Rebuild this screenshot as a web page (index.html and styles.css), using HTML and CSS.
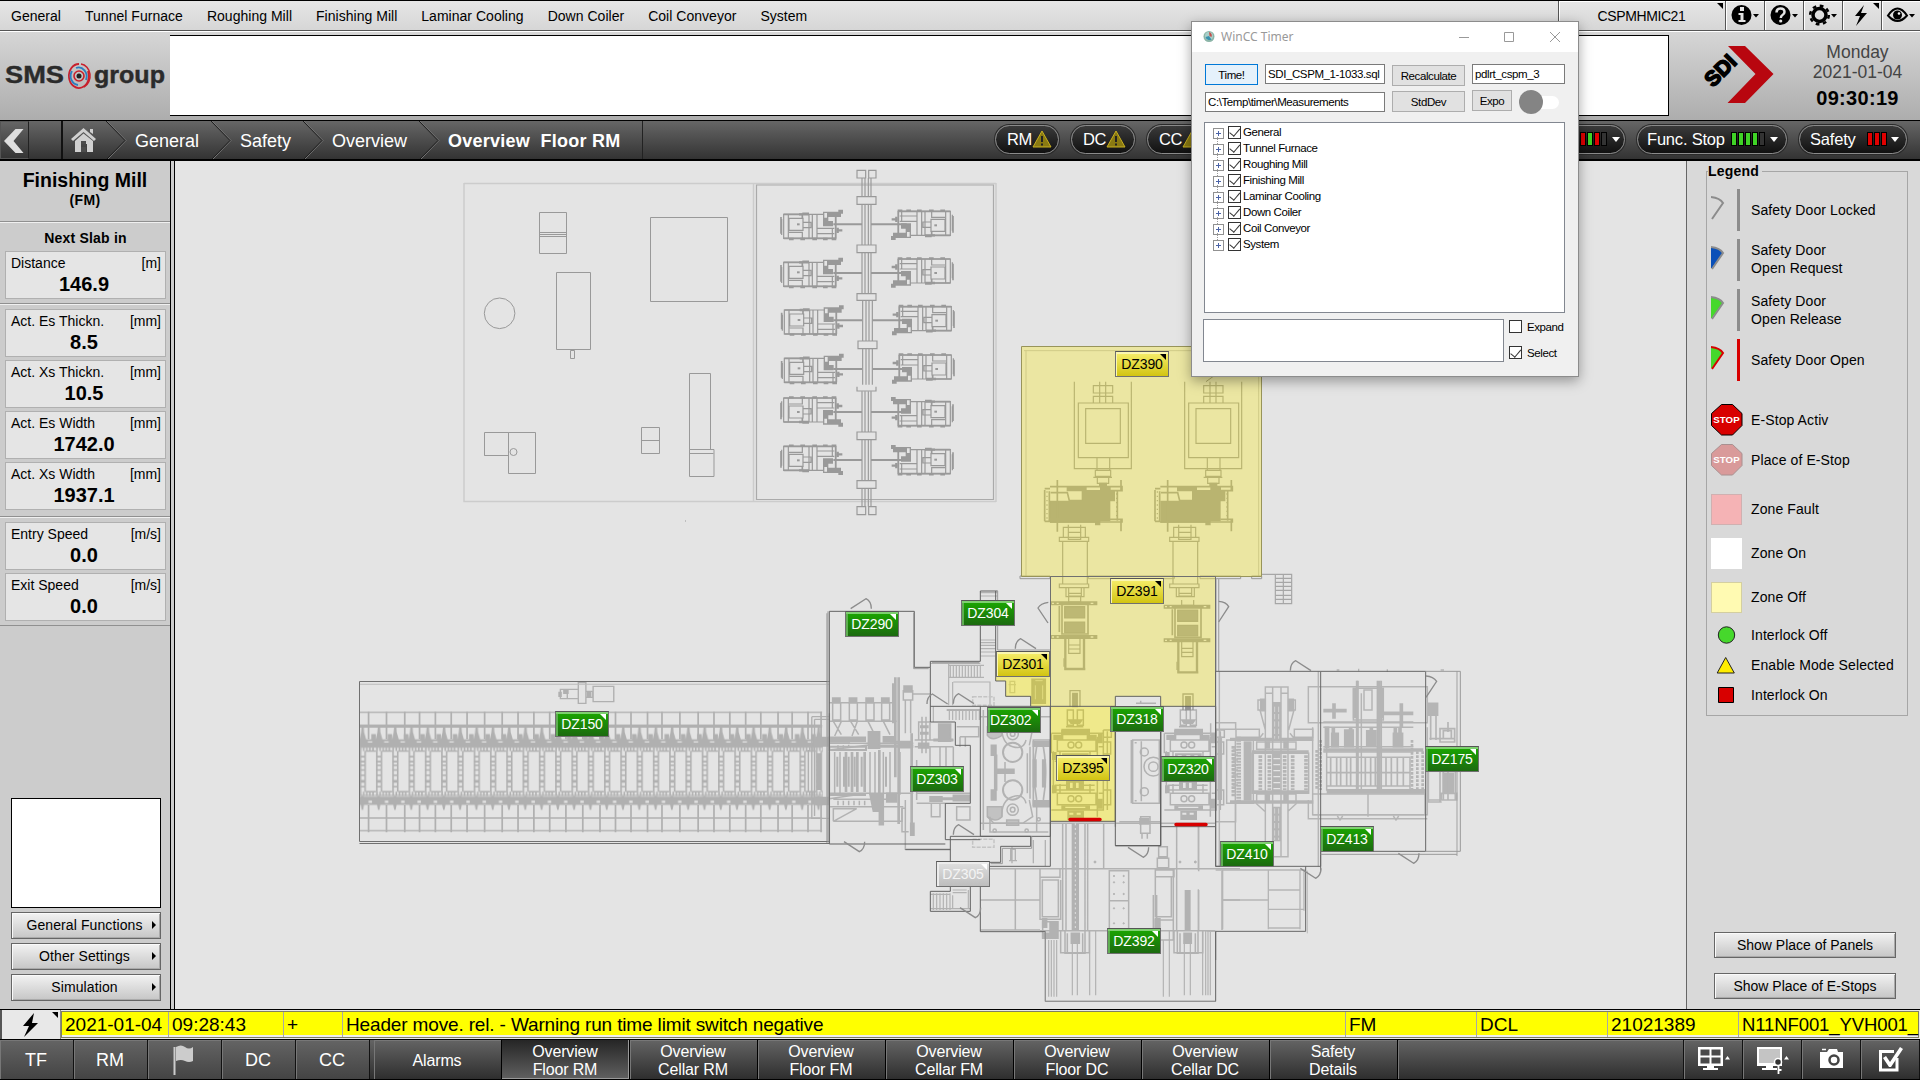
FILE: index.html
```html
<!DOCTYPE html>
<html lang="en">
<head>
<meta charset="utf-8">
<title>Overview Floor RM</title>
<link rel="stylesheet" href="styles.css">
</head>
<body>
<div class="screen">
  <header class="menubar">
    <nav class="menu"><span>General</span><span>Tunnel Furnace</span><span>Roughing Mill</span><span>Finishing Mill</span><span>Laminar Cooling</span><span>Down Coiler</span><span>Coil Conveyor</span><span>System</span></nav>
    <div class="host corner">CSPMHMIC21</div>
    <div class="tool"><svg width="39" height="28"><circle cx="15.500" cy="14" r="10"/><path d="M14 6h4v4h-4zM12.500 12h5v7h2v2h-7v-2h2v-5h-2z" fill="#e4e4e4"/><path d="M27 13h6l-3 3.500z"/></svg></div>
    <div class="tool"><svg width="39" height="28"><circle cx="15.500" cy="14" r="10"/><path d="M11.500 11.500q0-4 4-4t4 3.500q0 2-2 3-1.700 1-1.700 3" fill="none" stroke="#e4e4e4" stroke-width="2.500"/><circle cx="15.700" cy="20" r="1.600" fill="#e4e4e4"/><path d="M27 13h6l-3 3.500z"/></svg></div>
    <div class="tool"><svg width="39" height="28"><circle cx="15.500" cy="14" r="6.500" fill="none" stroke="#000" stroke-width="3.500"/><circle cx="15.500" cy="14" r="9.300" fill="none" stroke="#000" stroke-width="2.500" stroke-dasharray="3.700 3.600"/><path d="M27 13h6l-3 3.500z"/></svg></div>
    <div class="tool corner"><svg width="39" height="28"><path d="M21 4l-9 11h5l-4 10 11-13h-6z"/></svg></div>
    <div class="tool"><svg width="39" height="28"><path d="M6 14.500q9.500-14 19 0q-9.500 11-19 0z" fill="none" stroke="#000" stroke-width="2"/><circle cx="15.500" cy="14" r="4.500"/><circle cx="17" cy="12.500" r="1.300" fill="#fff"/><path d="M27 13h6l-3 3.500z"/></svg></div>
  </header>

  <section class="banner">
    <svg class="sms" width="170" height="86" viewBox="0 32 170 86" fill="none">
      <text x="5" y="82.500" textLength="59" lengthAdjust="spacingAndGlyphs">SMS</text>
      <g transform="translate(67 62)"><path d="M12 2a10 12 0 1 0 9 7" stroke="#c8202c" stroke-width="1.800"/><path d="M14 2a10 12 0 0 1 3 23" stroke="#c8202c" stroke-width="1.500"/><path d="M5 9a8 9 0 0 0 6 14M9 6a8 9 0 0 1 10 12" stroke="#2b7fc0" stroke-width="1.800"/><circle cx="12" cy="14" r="5" stroke="#c8202c" stroke-width="1.600"/><circle cx="12" cy="14" r="2.500" fill="#222"/></g>
      <text x="94" y="82.500" textLength="71" lengthAdjust="spacingAndGlyphs">group</text>
    </svg>
    <div class="blank"></div>
    <svg class="sdi" width="90" height="80" viewBox="1692 36 90 80"><path d="M1728 46h17l28.500 28-28.500 29h-17.500l28-29z" fill="#b8060f"/><text transform="translate(1713 88) rotate(-45)" font-size="21" class="sditext">SDI</text></svg>
    <div class="clock"><div>Monday</div><div>2021-01-04</div><b>09:30:19</b></div>
  </section>

  <section class="crumbs">
    <div class="back"><svg width="28" height="38"><path d="M3 19L14.500 7h8L12.500 19l10 12h-8z" fill="#dedede"/></svg></div>
    <div class="slot"></div>
    <div class="home"><svg width="44" height="38"><path d="M8 18L20.500 7 33 18l-2 2L20.500 11 10 20zM27 8h3v5l-3-2zM12 20l8.500-7.500L30 20v11h-6v-8h-6v8h-6z" fill="#d0d0d0"/><path d="M18 20h5v3h-5zM18 26h5v5h-5z" fill="#4c4c4c"/></svg></div>
    <svg class="sep" width="22" height="38"><path d="M0 0l19 19.500L1 38" /></svg><span class="c1">General</span>
    <svg class="sep" width="22" height="38"><path d="M0 0l19 19.500L1 38" /></svg><span class="c2">Safety</span>
    <svg class="sep" width="22" height="38"><path d="M0 0l19 19.500L1 38" /></svg><span class="c3">Overview</span>
    <svg class="sep" width="22" height="38"><path d="M0 0l19 19.500L1 38" /></svg><b class="c4">Overview&nbsp; Floor RM</b>
    <div class="pills">
      <div class="pill p1">RM<svg class="warn" width="20" height="18"><path d="M10 1l9 16H1z"/><path class="mark" d="M10 6v6M10 13.500v2"/></svg></div>
      <div class="pill p1">DC<svg class="warn" width="20" height="18"><path d="M10 1l9 16H1z"/><path class="mark" d="M10 6v6M10 13.500v2"/></svg></div>
      <div class="pill p1">CC<svg class="warn" width="20" height="18"><path d="M10 1l9 16H1z"/><path class="mark" d="M10 6v6M10 13.500v2"/></svg></div>
      <div class="pill p2">E-Stop<i class="bars"><i class="g"></i><i class="r"></i><i class="g"></i><i class="r"></i><i></i></i><i class="tri"></i></div>
      <div class="pill p3">Func. Stop<i class="bars"><i class="g"></i><i class="g"></i><i class="g"></i><i class="g"></i><i></i></i><i class="tri"></i></div>
      <div class="pill p4">Safety<i class="bars"><i class="r"></i><i class="r"></i><i class="r"></i></i><i class="tri"></i></div>
    </div>
  </section>

  <main class="main">
    <aside class="left">
      <div class="head"><h1>Finishing Mill</h1><h2>(FM)</h2></div>
      <div class="grp first"><h3>Next Slab in</h3>
        <div class="val"><p>Distance<span>[m]</span></p><b>146.9</b></div></div>
      <div class="grp">
        <div class="val"><p>Act. Es Thickn.<span>[mm]</span></p><b>8.5</b></div>
        <div class="val"><p>Act. Xs Thickn.<span>[mm]</span></p><b>10.5</b></div>
        <div class="val"><p>Act. Es Width<span>[mm]</span></p><b>1742.0</b></div>
        <div class="val"><p>Act. Xs Width<span>[mm]</span></p><b>1937.1</b></div></div>
      <div class="grp last">
        <div class="val"><p>Entry Speed<span>[m/s]</span></p><b>0.0</b></div>
        <div class="val"><p>Exit Speed<span>[m/s]</span></p><b>0.0</b></div></div>
      <div class="lower">
        <div class="preview"></div>
        <div class="btn more">General Functions</div>
        <div class="btn more">Other Settings</div>
        <div class="btn more">Simulation</div>
      </div>
    </aside>

    <div class="stage">
      <svg class="plan" width="1510" height="849" viewBox="175 161 1510 849" fill="none">
        <defs>
          <g id="motor" stroke="#999" stroke-width="3.600">
            <path d="M-86-36H70V36H-86zM-92-22V26M-70-24H-28V12H-70zM-72-36V36M-10-36V36M0-36V36M14-36V36M14 6H66M14 22H66M60 6V34M-28-12H-4V4H-28M-70 18H-30V36"/>
            <path d="M-94-28V22M-86-36H-30V-24M70-36V36M-86 36H70" stroke-width="5"/>
            <path d="M-70 38h14M-36 38h14M0 38h14M32 38h14M58 38h14M-30-38h20M-40-36h30M72 12h18M76 4v16" stroke-width="7"/>
            <path d="M32-44h46v-6h14v12h-6v10H48v12h14v16H32z" fill="#999" stroke="none"/>
            <path d="M36-40h8v14h-8zM18-10h12v6H18z" fill="#e4e4e4" stroke="none"/>
            <path d="M-46-6h8" stroke-width="6"/>
          </g>
          <pattern id="roll" patternUnits="userSpaceOnUse" x="57" y="395" width="47.300" height="365">
            <g stroke="#b0b0b0" stroke-width="4.600" transform="translate(0 -395)">
              <path d="M2.500 513V635M16 513V635M2 530h14M0 545h16M2 556h14M0 570h16M2 586h14M0 602h16M2 606h14M0 620h16M18 513H47M18 635H47M3 502V513M12 502V513M21 502V513M30 502V513M39 502V513M3 635V648M12 635V648M21 635V648M30 635V648M39 635V648"/>
              <path d="M-2 502H50M-2 646H50" stroke-width="3"/>
              <path d="M0 478H47.500V502H0zM0 650H47.500V675H0zM0 478l4-20 2-20h6l1 18 6 22zM0 652l8-5 8 5zM3 674h10l-3 16H6zM34 462h13v18H34z" fill="#b0b0b0" stroke="none"/>
              <path d="M24 484h13v4H24zM26 662h10v7H26z" fill="#e4e4e4" stroke="none"/>
            </g>
          </pattern>
          <g id="drive" stroke="#939393" stroke-width="3.500">
            <path d="M223 155V416H394V155M235 219H385V383H235zM257 236H361V340H257zM280 167h58v22h-58zM280 199h58v20h-58zM299 155v64M317 155v64M291 383v38h38V383M286 421h46v18h-46zM280 442h56M292 442v18h34v-18"/>
            <path d="M297 458h24v12h-24zM200 468h60v16h-60zM245 480h100v34h-14v60h-30v12h-16v-8H150v-66H245zM300 470h32v16h-32z" fill="#939393" stroke="none"/>
            <path d="M172 450v155M150 470H366V482H330M150 576H366V568H330M134 480V574M148 484V572M134 476h16M134 574h16M363 450v32M363 568v36M352 484V572M152 488h50l6 24h40" stroke-width="5"/>
            <path d="M141 484V572M350 490V568" stroke-dasharray="4 9"/>
            <path d="M205 584V628H242V584M190 592H256V622H190zM178 622H266V634H178zM188 634V762M262 634V762M178 762H266V773H178zM198 773V800H252V773M206 773V800M244 773V800M206 790h38M206 798h38M206 607h38"/>
          </g>
          <g id="coupling" stroke="#939393" stroke-width="3.500">
            <path d="M186 820H264V912H186zM178 828V906" stroke-width="5"/>
            <path d="M194 830H254V864H194zM194 876H254V908H194z" fill="#999"/>
            <path d="M152 820H292M152 921H292" stroke-width="12"/>
            <path d="M156 820h6M170 820h6M272 820h8M156 921h6M170 921h6M272 921h8" stroke="#e4e4e4" stroke-width="4"/>
            <path d="M206 926V970H240V926M206 945h34M206 957h34M192 985v25M206 800v16h36v-16"/>
            <path d="M193 1017H256M196 926V1020M252 926V1020" stroke-width="7"/>
            <path d="M210 1130V1082H240V1130" stroke-width="4"/><path d="M218 1090h14v40h-14z" fill="#939393"/>
          </g>
          <g id="stand" stroke="currentColor" fill="none" stroke-width="4.400">
            <path d="M742 450h18v46h-18zM772 450h18v46h-18zM738 500h52"/>
            <path d="M742 478h48l-10 14h-28zM724 506h86v20h-86zM700 524h30v16h-30zM800 524h30v16h-30z" fill="currentColor" stroke="none"/>
            <path d="M712 540H828V574H712zM694 520V580M700 574V700M832 530V770M712 700H828V734H712zM704 590h120M704 604h120M704 676h120M704 690h120M726 510V540M806 510V540M694 520H850M694 750H850M720 574V600M810 574V600M720 672V700M810 672V700M850 510V752M862 514V750M850 510h24v22h-24M850 546h22v36h-22M850 690h22v44h-22M836 560h14M836 700h14"/>
            <circle cx="753" cy="555" r="9"/><circle cx="776" cy="555" r="9"/><circle cx="753" cy="716" r="9"/><circle cx="776" cy="716" r="9"/>
            <path d="M726 580h80v24h-80zM738 662h54v28h-54zM724 736h86v14h-86zM742 752h50v28h-50zM696 576h14v24h-14zM696 676h14v24h-14zM834 520h14v30h-14zM834 716h14v30h-14z" fill="currentColor" stroke="none"/>
            <path d="M734 586h12v8h-12zM760 586h12v8h-12zM784 586h10v8h-10zM750 668h8v16h-8zM768 668h8v16h-8zM748 758h12v6h-12zM770 758h12v6h-12zM736 740h60v4h-60z" fill="#e4e4e4" stroke="none"/>
          </g>
          <g id="door" stroke="#8c8c8c" stroke-width="4"><path d="M0 0L46-30Q62-22 62 0"/></g>
        </defs>

        <!-- hall with the twelve auxiliary drives -->
        <g stroke="#ccc" stroke-width="1.500"><path d="M464 183.500H996M464 183V501.500H996M753.500 183V502M996 183V502"/></g>
        <g stroke="#aaa" stroke-width="1.200"><path d="M756.500 185H993.500V499.500H756.500z"/></g>
        <g stroke="#999" stroke-width="1">
          <path d="M539.500 212.500h27v41h-27zM539.500 232.500h27M539.500 234.500h27M539.500 236.500h27M556.500 272.500h34v77h-34zM570.500 350.500h4v8h-4zM650.500 217.500h77v84h-77zM689.500 373.500h21v76h-21zM689.500 449.500h24.500v27h-24.500zM689.500 453.500h24M484.500 432.500h24v23h-24zM508.500 432.500h27v41h-27zM484.500 455.500h24M641.500 427.500h18v26h-18zM641.500 440.500h18M685 521h1"/>
          <circle cx="499.600" cy="313.300" r="15.300"/><circle cx="513.500" cy="452" r="3.500"/>
        </g>
        <g transform="translate(740 150) scale(.33333)" stroke="#999" stroke-width="3.500">
          <path d="M366 84V430M375 84V430M385 84V430M393 84V430M368 451V704M378 451V704M387 451V704M397 451V704M366 724V1070M375 724V1070M385 724V1070M393 724V1070"/>
          <g fill="#e4e4e4"><path d="M351 61h26v23h-26zM386 61h22v23h-22zM351 140h57v23h-57zM351 285h57v23h-57zM351 431h57v20h-57zM354 573h57v23h-57zM351 846h57v23h-57zM351 992h57v23h-57zM351 1070h26v24h-26zM386 1070h22v24h-22z"/></g>
          <path d="M351 710v13h57v-13"/>
          <path d="M280 223H366M393 223H500M280 369H366M393 369H500M280 511H366M397 511H500M280 657H366M397 657H500M280 786H366M393 786H500M280 930H366M393 930H500" stroke-width="6"/>
          <use href="#motor" x="217" y="229"/><use href="#motor" x="217" y="373"/><use href="#motor" x="219" y="516"/><use href="#motor" x="219" y="661"/>
          <use href="#motor" transform="translate(217 780) scale(1 -1)"/><use href="#motor" transform="translate(217 925) scale(1 -1)"/>
          <use href="#motor" transform="translate(545 220) scale(-1)"/><use href="#motor" transform="translate(545 363) scale(-1)"/><use href="#motor" transform="translate(548 506) scale(-1)"/><use href="#motor" transform="translate(548 651) scale(-1)"/>
          <use href="#motor" transform="translate(545 791) scale(-1 1)"/><use href="#motor" transform="translate(545 935) scale(-1 1)"/>
        </g>

        <!-- roller table -->
        <g transform="translate(340 580) scale(.34437 .33333)">
          <rect x="57" y="395" width="1345" height="365" fill="url(#roll)"/>
          <g stroke="#b0b0b0" stroke-width="5">
            <path d="M57 437H1400M57 714H1400"/><path d="M57 397H1400M57 752H1400" stroke="#bcbcbc"/>
            <path d="M83 395V478M135 395V478M188 395V478M231 395V478M277 395V478M323 395V478M369 395V478M420 395V478M471 395V478M517 395V478M563 395V478M609 395V478M656 395V478M705 395V478M755 395V478M800 395V478M845 395V478M893 395V478M935 395V478M987 395V478M1040 395V478M1086 395V478M1132 395V478M1178 395V478M1222 395V478M1272 395V478M1313 395V478M1359 395V478M1397 395V478"/>
            <path d="M83 675V757M135 675V757M188 675V757M231 675V757M277 675V757M323 675V757M369 675V757M420 675V757M471 675V757M517 675V757M563 675V757M609 675V757M656 675V757M705 675V757M755 675V757M800 675V757M845 675V757M893 675V757M935 675V757M987 675V757M1040 675V757M1086 675V757M1132 675V757M1178 675V757M1222 675V757M1272 675V757M1313 675V757M1359 675V757M1397 675V757"/>
            <path d="M57 437H1400M57 441H1400" />
            <path d="M692 308h22v62h-22zM735 319h60v46h-60zM640 328h52v28h-52zM660 328v28M714 334h20v18h-20zM1370 410v305h50M1378 418v290M1370 410h50M1378 418h42M1360 510V635" stroke-width="4"/>
            <path d="M634 335h10v16h-10zM648 330h16v12h-16zM716 334h14v20h-14zM1380 470h40v30h-40zM1380 650h40v26h-40zM1384 520h14v110h-14z" fill="#b0b0b0" stroke="none"/>
          </g>
          <path d="M57 313H1420" stroke="#bbb" stroke-width="3"/>
          <path d="M1414 100V790" stroke="#aaa" stroke-width="4"/>
        </g>

        <!-- mill stands, coordinates at three units per pixel -->
        <g transform="translate(820 560) scale(.33333)" stroke="#b2b2b2" stroke-width="4.500">
          <path d="M38 428h24v52h-24zM88 428h24v52h-24zM138 428h24v52h-24zM185 428h24v52h-24zM28 428H220M28 484H230M40 484l24 40M64 484l-20 44M92 484l24 40M112 484l-16 44M144 484l20 40M190 484l20 40M28 550H280M28 570L140 556H280M28 576V716M44 576V704M60 576V700M150 576V704M165 576V700M190 576V704M210 576V700M240 576V704M28 700H280M40 718H200M40 740H250M40 784V746L110 746L40 784H246V745M28 716L140 700M28 740H160"/>
          <path d="M78 576v120M96 576v120M112 576v120M134 576v120M178 570v130M226 352v300M236 352v440M275 520v300M220 370v120" stroke-width="8"/>
          <path d="M38 414h22v14H38zM88 414h22v14H88zM138 414h22v14h-22zM185 414h22v14h-22zM252 378h24v18h-24zM145 515h34v50h-34zM190 530h30v16h-30zM28 532h60v14H28zM150 704h40v50h-30zM356 492h36v52h-36zM178 754h12v40h-12zM272 790h10v36h-10zM200 700h30v26h-30zM92 532h44v12H92zM240 545h36v18h-36zM296 550h30v14h-30zM330 710h36v14h-36zM400 706h48v16h-48z" fill="#b2b2b2"/>
          <path d="M28 560h110v10H28zM150 560h130M28 705h110M210 545h60M52 590v90M72 590v90M86 590v90M104 590v90M125 590v90M198 590v90" stroke-width="6"/>
          <path d="M250 392h28v28h-28zM256 420v100M272 420v100M296 486h34v54h-34zM306 470v110M318 470v110M284 540H400M284 560H400M290 600V720M330 560V620M360 560V620M378 560V620M400 560V620M290 700H450M290 730H376M334 730h26v40h-26zM256 720V868H390M256 745h-10v70h20M280 402H331M410 500h66v30h-56M420 530v30M436 530v30M410 740h40v40h-40z"/>
          <path d="M300 500h26M300 520h26M340 540h60M330 716h120" stroke-width="9"/>
          <path d="M54 556v12M70 556v10M86 554v10M54 722v14M70 722v14M86 722v14M102 722v14M118 722v14M134 722v14M28 460V850"/>
          <!-- stairs and corridors -->
          <g stroke-width="3.500"><path d="M391 316V352M400 316V352M409 316V352M418 316V352M427 316V352M436 316V352M445 316V352M454 316V352M463 316V352M472 316V352M481 316V352M386 316h106M386 352h106M386 308V436M400 366H510V436M398 366V436M481 240H527M481 248H527M481 256H527M481 266H527M481 276H527M481 288H527M481 98H533M481 108H533M331 310H481M340 439V486M398 447V480M388 447V480M408 447V480M418 447V480M428 447V480M438 447V480M448 447V480M458 447V480M468 447V480M478 447V480"/>
          <path d="M340 1000v50M350 1000v50M360 1000v50M370 1000v50M380 1000v50M390 1000v50M331 1003h60M331 1046h120M398 990h42M398 998h42M398 1006v40M445 990v56"/></g>
          <path d="M380 450H480" stroke-width="6"/>
          <path d="M458 410h64v26h-64zM458 838h64v24h-64z" stroke="#c4c4c4" stroke-dasharray="12 4"/>
          <!-- edger -->
          <g>
            <path d="M502 500h44v26q-30 20-44 0zM502 740h44v30q-20 20-44 0zM560 780h36v16h-36z" fill="#c2c2c2"/>
            <path d="M502 500l20-14h86l30 20-10 50M545 500q0 50 33 60t40-20M545 770q0-50 33-60t40 20M502 770l20 20h86l30-20-10-50"/>
            <circle cx="578" cy="522" r="17"/><circle cx="578" cy="522" r="7"/><circle cx="578" cy="749" r="17"/><circle cx="578" cy="749" r="7"/>
            <path d="M510 770V816H685M650 740V816M630 560V716M622 580V700M490 450V810M481 470H691M481 790H691M555 606V666"/>
            <path d="M514 556h14v30h-14zM514 690h14v30h-14zM524 586h6v104h-6zM532 628h50v12h-50zM640 600h8v80h-8zM668 600h8v80h-8zM640 545h50v14h-50zM640 722h50v14h-50z" fill="#b2b2b2"/>
            <circle cx="578" cy="577" r="29" stroke-width="6"/><circle cx="578" cy="690" r="29" stroke-width="6"/>
            <path d="M640 540H690V740H640zM650 560q-14 80 0 160M670 560q14 80 0 160" stroke-width="5"/>
            <circle cx="524" cy="812" r="5"/><circle cx="620" cy="812" r="5"/><circle cx="656" cy="778" r="5"/>
          </g>
          <g color="#999"><use href="#stand"/></g><g color="#b2b2b2"><use href="#stand" x="339"/></g>
          <!-- pillars and cooling tank between the stands -->
          <path d="M938 540h80v190h-80zM934 540V730M886 500V800M948 430h60M962 430v-8M962 770h28v50h-28zM966 820v16M982 820v16M898 785H1022"/><circle cx="973" cy="576" r="12"/><circle cx="973" cy="695" r="12"/><circle cx="1000" cy="620" r="28"/><circle cx="1000" cy="620" r="14"/><path d="M960 776h26v16h-26z" fill="#b2b2b2"/>
          <path d="M964 544v180M944 548h6M944 722h6" />
          <!-- cellar below the stands -->
          <path d="M691 790H1186M691 926H1110M728 790V1110M738 790V1110M795 790V1110M803 790V1110M851 790V924M868 932h58V1022h-58zM868 1022h58v84h-58zM1000 1005v110M1010 1005v110M1060 932V1110M1070 790V1110M1136 790V934M1136 990V1110M481 926H691M481 1020H586M586 926V1110M481 1110H586M586 1020H660M586 1110H660M1206 932V1110M1206 1020H1260M1092 926H1260M667 960h48v110h-48zM660 926V1080M722 960V1080M672 926h40M660 1078h62M668 1085h44v50h-44zM1016 860h26v30h-26zM1012 895h34v28h-34zM1006 950h48v120h-48zM1006 1080h54v60h-54zM660 926h60v26h-60zM1006 930h56v20h-56z"/>
          <path d="M766 790V1110" stroke-width="22"/><path d="M766 790V1110" stroke="#e0e0e0" stroke-width="3" stroke-dasharray="6 8"/><path d="M1103 990V1112" stroke-width="18"/>
          <path d="M686 1140V1310M694 1140V1310M702 1140V1310M710 1140V1310M757 1140V1306M772 1140V1306M809 1112V1306M827 1112V1306M1030 1140V1310M1048 1112V1310M1093 1140V1306M1111 1140V1306M1148 1112V1306M1157 1112V1306M1164 1112V1306M1171 1112V1306" stroke-width="3.500"/>
          <path d="M735 1112h60v68h-60zM722 1112h86v66h-86zM1072 1112h62v68h-62zM1062 1112h86v66h-86zM742 1120v60M788 1120v60M1080 1120v60M1126 1120v60M660 1112H1186"/>
          <path d="M754 1120h24v30h-24zM1092 1120h22v30h-22zM668 1120h20v14h-20zM690 1085h24v50h-24zM1006 1076h14v26h-14zM668 1076h12v26h-12z" fill="#b2b2b2"/>
          <g fill="#b2b2b2" stroke-width="3"><circle cx="882" cy="948" r="2"/><circle cx="911" cy="948" r="2"/><circle cx="882" cy="967" r="2"/><circle cx="911" cy="967" r="2"/><circle cx="882" cy="1002" r="2"/><circle cx="911" cy="1002" r="2"/><circle cx="882" cy="1045" r="2"/><circle cx="911" cy="1045" r="2"/><circle cx="882" cy="1090" r="2"/><circle cx="911" cy="1090" r="2"/><circle cx="825" cy="906" r="3"/><circle cx="1080" cy="906" r="3"/><circle cx="1126" cy="906" r="3"/></g>
          <path d="M572 868h14v34h-14zM567 902h24M576 860v50M640 840V910M676 840V918M570 364h14v34h-14zM566 374h22" stroke-width="4"/>
          <path d="M636 358h40v72h-40z" fill="#999" stroke="#999"/><path d="M646 362h22M646 376v42M668 376v42" stroke="#e4e4e4" stroke-width="2"/>
        </g>

        <!-- drives with their spindles -->
        <g transform="translate(1000 330) scale(.33333)">
          <use href="#drive"/><use href="#drive" x="331"/>
          <use href="#coupling"/><use href="#coupling" x="339" y="10"/>
          <path d="M72 62H785M78 60V738M776 140V738" stroke="#b8b8b8" stroke-width="3"/>
          <path d="M60 738h90v8H60zM265 738h258v8H265zM600 738h122v8H600zM755 738h30v8H755z" stroke="#999" stroke-width="3"/>
          <path d="M826 733h49v88h-49zM850 733v88M826 745h49M826 757h49M826 769h49M826 781h49M826 796h49M826 808h49M785 733h40" stroke="#a6a6a6" stroke-width="3.500"/>
          <path d="M656 745V1024M648 1024V745" stroke="#aaa" stroke-width="4"/>
          <path d="M618 155l22-16" stroke="#888" stroke-width="3"/>
        </g>

        <!-- shear and exit side -->
        <g transform="translate(1180 640) scale(.33333)" stroke="#b5b5b5" stroke-width="4.400">
          <path d="M256 141H324V650H256zM278 141V650M303 141V650M256 160h22M303 160h20M234 180h22v30h-22zM324 180h22v30h-22zM240 210l16 60M342 210l-16 60M168 268h70v24h-70zM343 268h56v24h-56zM140 300h80v190h-80zM166 300V490M216 340H386V460H216zM230 306h118v22H230zM230 462h118v24H230zM385 140H742V248H385zM398 262V524H742V262M385 480V536H742M107 248h60v20h-60M92 250V290M115 290V480M124 290V480M107 545h60V490M166 490V680M234 300l16-20M346 300l-16-20M228 490l26 24M350 490l-26 24M415 94V680M118 94V680"/>
          <path d="M150 298H400M150 486H400M216 336H386M216 456H386" stroke-width="10"/>
          <path d="M290 186V296M290 500V604" stroke-width="26"/><path d="M284 200V296M296 200V296M284 505V600M296 505V600" stroke="#e4e4e4" stroke-width="2" stroke-dasharray="16 6"/>
          <path d="M203 304V482" stroke-width="24"/><path d="M176 290V486" stroke-width="14" stroke-dasharray="6 3"/>
          <path d="M241 346V450M268 346V450M314 346V450M338 346V450M378 346V450M160 318V470" stroke-width="11" stroke-dasharray="8 3"/>
          <path d="M290 340V454" stroke-width="22" stroke-dasharray="14 4"/>
          <path d="M158 330h16M158 345h16M158 360h16M158 375h16M158 390h16M158 405h16M158 420h16M158 435h16"/>
          <path d="M242 178h14v34h-14zM326 178h14v34h-14zM258 306h10v18h-10zM312 306h10v18h-10zM258 464h10v18h-10zM312 464h10v18h-10z" fill="#b5b5b5"/>
          <path d="M532 122V450M544 160V450M592 122V450M604 122V450M520 145H610V240H520zM552 150H576V210H552zM430 246H700M430 262H700M440 262V450M430 320H700M430 336H700M440 352H690V450H440z"/>
          <path d="M462 190V236M664 190V262M430 212h70M610 220h90M524 145v90M606 145v90M460 264V312M512 264V312M574 264V312M646 264V312M660 264V312M430 330H730" stroke-width="11"/>
          <path d="M455 280h20v40h-20zM494 270h26v50h-26zM560 272h28v44h-28zM640 280h28v40h-28zM436 262h10v60h-10z" fill="#b5b5b5"/>
          <path d="M440 454H735" stroke-width="14"/><path d="M440 398H690M440 438H690M452 352V440M470 352V440M482 352V440M500 352V440M512 352V440M556 352V440M572 352V440M586 352V440M618 352V440M634 352V440M652 352V440M670 352V440" stroke-width="5"/>
          <path d="M532 122V450M598 122V450" stroke-width="9"/>
          <path d="M696 300V452M712 334V452M728 334V452M422 300V450M410 330V450" stroke-width="8" stroke-dasharray="8 4"/>
          <path d="M398 462H735V524H398M564 462V530M472 528l8 12 8-12M640 528l8 12 8-12"/>
          <path d="M745 190h28v36h-28zM790 400h30v60h-30z" fill="#b5b5b5"/><path d="M752 226V300M768 226V300M780 266h44v40h-44zM790 272h24v24h-24zM804 246v30M745 395V486H780V395M790 395V480M804 395V480M826 395V480M745 480h86M745 486h40M784 460h46v20h-46zM748 296h76" stroke-width="5"/>
          <path d="M470 90h8M536 86v8M622 88v8M782 90h10" stroke-width="4"/>
          <path d="M107 690H377M128 690V868M128 780H265M265 690V868M265 750H360M265 808H372M360 690V868M372 690V812M265 864H360M55 560V690M55 748V870M107 874H80" stroke-width="4"/>
          <path d="M831 94V648" stroke="#aaa" stroke-width="3.500"/>
        </g>

        <!-- zones that are switched off -->
        <g fill="#f8ea36" fill-opacity=".38">
          <path d="M1021.500 346.500H1261.500V576.500H1021.500z"/>
          <path d="M1050.500 577H1216V706.500H1161V696.500H1115.500V706.500H1050.500z"/>
        </g>
        <g fill="#fdf01e" fill-opacity=".45">
          <path d="M995.700 651H1050.500V706.500H1030.700V696.500H1005.700V681H995.700z"/>
          <path d="M1050.500 706.500H1115.500V821.500H1050.500z"/>
        </g>

        <!-- zone outlines -->
        <g stroke="#707070" stroke-width="1">
          <path d="M1021.500 346.500H1261.500V576.500H1021.500z" stroke="#98945a"/>
          <path d="M1050.500 576.500H1215.500V706.500"/><path d="M1050.500 576.500V706.500M359.500 681.500H829.500M359.500 681.500V841.500H829.500M359.500 843.500H829.500"/>
        </g>
        <g transform="translate(820 560) scale(.33333)" stroke="#626262" stroke-width="3">
          <path d="M28 154H283V322H331V304H481V93H533M527 93V363H557V409H632V439M28 154V852H376M331 322V486H406V556H451V730H376V839H481M331 439H886V409H1022V439H1187M481 439V829H691V439M691 439V919H481V1115H676V1324H1187V1115M886 439V857H1022V439M1022 800H1187V439M691 784H886V439M391 829V994H331V1054H451V980M391 829H632V859H542V907H509M256 869H391M1187 800V919H1206"/>
          <path d="M24 154V846M281 158V326H326M533 93V270H691M336 308H478M635 829V865H547V911H512M676 1115V1324H1187" stroke="#999"/>
          <path d="M1022 439V857M886 857H1022" stroke-width="4"/>
        </g>
        <g transform="translate(1180 640) scale(.33333)" stroke="#666" stroke-width="3">
          <path d="M107 94H422V679H107zM422 94H737V634H422M422 634V692M377 679V874H107V960"/>
          <path d="M737 94H841V634H737M422 643H831" stroke="#999"/><path d="M382 692V880" stroke="#bbb"/>
        </g>

        <!-- safety doors -->
        <g transform="translate(820 560) scale(.33333)">
          <use href="#door" x="92" y="146"/><use href="#door" transform="translate(648 266) scale(-1 1)"/><use href="#door" transform="translate(383 432) scale(-1 1)"/><use href="#door" transform="translate(462 431) scale(-1 1)"/><use href="#door" transform="translate(462 824) scale(-1 1)"/>
          <use href="#door" transform="translate(72 845) scale(1 -1)"/><use href="#door" transform="translate(924 862) scale(1 -1)"/><use href="#door" transform="translate(420 1043) scale(1 -1)"/>
          <path d="M684 189L654 144Q662 130 685 127M1196 186L1226 140Q1218 125 1196 124" stroke="#8c8c8c" stroke-width="4"/>
        </g>
        <g transform="translate(1180 640) scale(.33333)">
          <use href="#door" transform="translate(393 92) scale(-1 1)"/><path d="M738 172L770 124Q760 110 738 108" stroke="#8c8c8c" stroke-width="4"/><use href="#door" transform="translate(655 640) scale(1 -1)"/><use href="#door" transform="translate(361 685) scale(1 -1)"/>
        </g>
        <path d="M1070 819.500h30M1176 824.500h30" stroke="#d80000" stroke-width="3.500" stroke-linecap="round"/>
      </svg>
      <div class="dz g" style="left:555px;top:711px">DZ150</div>
      <div class="dz g" style="left:845px;top:611px">DZ290</div>
      <div class="dz g" style="left:961px;top:600px">DZ304</div>
      <div class="dz y" style="left:996px;top:651px">DZ301</div>
      <div class="dz g off" style="left:987px;top:707px">DZ302</div>
      <div class="dz g" style="left:910px;top:766px">DZ303</div>
      <div class="dz n" style="left:936px;top:861px">DZ305</div>
      <div class="dz g" style="left:1107px;top:928px">DZ392</div>
      <div class="dz g" style="left:1110px;top:706px">DZ318</div>
      <div class="dz y" style="left:1110px;top:578px">DZ391</div>
      <div class="dz y" style="left:1056px;top:755px">DZ395</div>
      <div class="dz g" style="left:1161px;top:756px">DZ320</div>
      <div class="dz y" style="left:1115px;top:351px">DZ390</div>
      <div class="dz g" style="left:1220px;top:841px">DZ410</div>
      <div class="dz g" style="left:1320px;top:826px">DZ413</div>
      <div class="dz g" style="left:1425px;top:746px">DZ175</div>
    </div>

    <aside class="right">
      <div class="legend">
        <h4>Legend</h4>
        <div class="row door"><svg width="30" height="44"><path d="M0 9q9 1 12 6L1 31" fill="none" stroke="#8c8c8c" stroke-width="2"/><path d="M27.500 1v42" stroke="#8c8c8c" stroke-width="3"/></svg>Safety Door Locked</div>
        <div class="row door"><svg width="30" height="44"><path d="M0 9q9 1 12 6L1 30L0 30z" fill="#0a50b8"/><path d="M0 9q9 1 12 6L1 31" fill="none" stroke="#8c8c8c" stroke-width="2"/><path d="M27.500 1v42" stroke="#8c8c8c" stroke-width="3"/></svg><span class="up">Safety Door<br>Open Request</span></div>
        <div class="row door"><svg width="30" height="44"><path d="M0 9q9 1 12 6L1 30L0 30z" fill="#46d82c"/><path d="M0 9q9 1 12 6L1 31" fill="none" stroke="#8c8c8c" stroke-width="2"/><path d="M27.500 1v42" stroke="#8c8c8c" stroke-width="3"/></svg><span>Safety Door<br>Open Release</span></div>
        <div class="row door"><svg width="30" height="44"><path d="M0 9q9 1 12 6L1 30L0 30z" fill="#46d82c"/><path d="M0 9q9 1 12 6L1 31" fill="none" stroke="#d80000" stroke-width="2"/><path d="M27.500 1v42" stroke="#d80000" stroke-width="3"/></svg>Safety Door Open</div>
        <div class="row stop gap"><svg width="32" height="32"><path d="M10.500.5h11l9.500 9v12l-9.500 9.500h-11L.5 21.500v-12z" fill="#d80000" stroke="#000"/><text x="15.500" y="19.300">STOP</text></svg>E-Stop Activ</div>
        <div class="row stop"><svg width="32" height="32"><path d="M10.500.5h11l9.500 9v12l-9.500 9.500h-11L.5 21.500v-12z" fill="#d99a9a" stroke="#a89090"/><text x="15.500" y="19.300">STOP</text></svg>Place of E-Stop</div>
        <div class="row zone gap2"><i class="sw fault"></i>Zone Fault</div>
        <div class="row zone"><i class="sw on"></i>Zone On</div>
        <div class="row zone"><i class="sw yel"></i>Zone Off</div>
        <div class="row lock"><svg width="31" height="20"><circle cx="15.500" cy="10" r="8.200" fill="#46d82c" stroke="#222"/></svg>Interlock Off</div>
        <div class="row lock"><svg width="31" height="20"><path d="M14.700 2.500l8.600 15.500H6.200z" fill="#ffed00" stroke="#222"/></svg>Enable Mode Selected</div>
        <div class="row lock"><svg width="31" height="20"><path d="M7.500 2.500h15v15h-15z" fill="#d80000" stroke="#000"/></svg>Interlock On</div>
      </div>
      <div class="actions"><div class="btn">Show Place of Panels</div><div class="btn">Show Place of E-Stops</div></div>
    </aside>
  </main>

  <section class="alarm">
    <div class="ack corner"><svg width="24" height="24"><path d="M15 0L4 13h6L5 24 19 10h-6z"/></svg></div>
    <div class="cells"><span class="a1">2021-01-04</span><span class="a2">09:28:43</span><span class="a3">+</span><span class="a4">Header move. rel. - Warning run time limit switch negative</span><span class="a5">FM</span><span class="a5">DCL</span><span class="a5">21021389</span><span class="a6">N11NF001_YVH001_</span></div>
  </section>

  <footer class="tabs">
    <div class="sm">TF</div><div class="sm">RM</div><div class="sm"><svg width="22" height="30"><path d="M1.500 2v28" stroke="#ccc" stroke-width="2"/><path d="M3 2q5-3 9 0t8 0v14q-4 2-8 0t-9 0z" fill="#ccc"/></svg></div><div class="sm">DC</div><div class="sm">CC</div>
    <div class="tab first">Alarms</div><div class="tab active">Overview<br>Floor RM</div><div class="tab">Overview<br>Cellar RM</div><div class="tab">Overview<br>Floor FM</div><div class="tab">Overview<br>Cellar FM</div><div class="tab">Overview<br>Floor DC</div><div class="tab">Overview<br>Cellar DC</div><div class="tab">Safety<br>Details</div>
    <div class="fill"></div>
    <div class="ib"><svg width="56" height="38"><path d="M12 7h25v19H12z" fill="#fff"/><path d="M14.500 9.500h9v6h-9zM25.500 9.500h9v6h-9zM14.500 17.500h9v6h-9zM25.500 17.500h9v6h-9z" fill="#4a4a4a"/><path d="M21 26h7v2h4v2H17v-2h4zM39 19.500l2.500-3.500 2.500 3.500z" fill="#fff"/></svg></div>
    <div class="ib"><svg width="56" height="38"><path d="M12 7h25v19H12z" fill="#fff"/><path d="M14 9h21v14H14z" fill="#c4c4c4"/><path d="M21 26h7v2h4v2H17v-2h4zM39 19.500l2.500-3.500 2.500 3.500z" fill="#fff"/><circle cx="33" cy="22" r="3.500" fill="#333" stroke="#fff" stroke-width="1.500"/><path d="M33.500 26v8M33.500 30h3" stroke="#fff" stroke-width="1.800"/></svg></div>
    <div class="ib"><svg width="56" height="38"><path d="M16 12h7l2-3h8l1 3h5v16H16z" fill="#fff"/><circle cx="30" cy="20" r="4.500" fill="#fff" stroke="#444" stroke-width="2.500"/><path d="M18 9.500h4" stroke="#fff" stroke-width="1.500"/></svg></div>
    <div class="ib"><svg width="56" height="38"><path d="M34 18v12H17.500V11.500H31" fill="none" stroke="#fff" stroke-width="3"/><path d="M20 18l3-2 4 6L37 7l3 2-12 18h-2z" fill="#fff"/></svg></div>
  </footer>

  <div class="dialog">
    <div class="title"><svg width="15" height="15"><circle cx="7" cy="7.500" r="5.500" fill="#8cb5a8"/><circle cx="7" cy="7" r="4" fill="#a9d0ca"/><path d="M7 3a4 4 0 0 1 2.500 5l-2-1z" fill="#c4504c"/><path d="M3.500 8a4 4 0 0 0 6 2.500L7 7z" fill="#3a91ad"/></svg><span>WinCC Timer</span>
      <svg class="ctl" width="102" height="12"><path d="M0 6.500h10M45.500 1.500h9v9h-9zM91 1l10 10M101 1L91 11" fill="none" stroke="#999"/></svg></div>
    <div class="form">
      <div class="wb time">Time!</div><div class="tb">SDI_CSPM_1-1033.sql</div><div class="wb">Recalculate</div><div class="tb">pdlrt_cspm_3</div>
      <div class="tb path">C:\Temp\timer\Measurements</div><div class="wb">StdDev</div><div class="pair"><div class="wb expo">Expo</div><div class="toggle"><i></i></div></div>
    </div>
    <ul class="tree"><li><i class="cb on"></i>General</li><li><i class="cb on"></i>Tunnel Furnace</li><li><i class="cb on"></i>Roughing Mill</li><li><i class="cb on"></i>Finishing Mill</li><li><i class="cb on"></i>Laminar Cooling</li><li><i class="cb on"></i>Down Coiler</li><li><i class="cb on"></i>Coil Conveyor</li><li><i class="cb on"></i>System</li></ul>
    <div class="bottom"><div class="out"></div><div class="checks"><p><i class="cb"></i>Expand</p><p><i class="cb on"></i>Select</p></div></div>
  </div>
</div>
</body>
</html>
```
FILE: styles.css
```css
* { box-sizing: border-box; margin: 0; padding: 0; }
body { font-family: "Liberation Sans", Arial, sans-serif; font-size: 14px; color: #000; background: #e4e4e4; overflow: hidden; }
svg { display: block; flex: none; }
.screen { position: relative; width: 1920px; height: 1080px; display: flex; flex-direction: column; }

/* menu bar */
.menubar { height: 31px; flex: none; display: flex; border-top: 1px solid #000; border-bottom: 1px solid #555; background: linear-gradient(#e6e6e6, #d6d6d6); }
.menu { flex: 1; display: flex; align-items: center; gap: 24px; padding-left: 11px; font-size: 14px; letter-spacing: .025px; }
.host { width: 167px; display: flex; align-items: center; justify-content: center; padding-right: 1px; border-left: 1px solid #555; box-shadow: inset 1px 1px #fff; letter-spacing: -.4px; }
.tool { width: 39px; height: 29px; border-left: 1px solid #555; box-shadow: inset 1px 1px #fff; }
.corner { position: relative; }
.corner::after { content: ""; position: absolute; right: 2px; top: 2px; border: 3px solid #000; border-left-color: transparent; border-bottom-color: transparent; }

/* banner */
.banner { height: 89px; flex: none; display: flex; border-top: 1px solid #fff; background: linear-gradient(#d6d6d6, #adadad); }
.sms text { font: bold 23.500px "Liberation Sans", Arial, sans-serif; fill: #2b2b2b; stroke: #2b2b2b; stroke-width: .4; }
.blank { width: 1499px; height: 81px; margin-top: 3px; background: #fff; border: 1px solid #000; border-left: 0; }
.sdi { margin: 4px 0 0 23px; }
.sditext { font-family: "Liberation Sans", Arial, sans-serif; font-weight: bold; stroke: #000; stroke-width: 1.600px; }
.clock { flex: 1; padding: 10px 0 0 13px; text-align: center; font-size: 17.500px; line-height: 20px; color: #444; }
.clock b { display: block; font-size: 20px; line-height: 33px; color: #000; letter-spacing: .3px; }

/* navigation path */
.crumbs { height: 41px; flex: none; display: flex; align-items: center; border-top: 1px solid #000; border-bottom: 2px solid #000; background: linear-gradient(#666, #333); color: #fff; font-size: 18px; }
.back { width: 29px; height: 38px; border: 1px solid #555; border-right-color: #222; }
.slot { width: 34px; height: 38px; border-right: 2px solid #111; }
.home { width: 43px; height: 38px; }
.sep { fill: none; stroke: #1c1c1c; stroke-width: 1; filter: drop-shadow(1px 0 #777); }
.crumbs span, .crumbs b { padding-left: 7px; line-height: 38px; padding-top: 1px; height: 38px; white-space: nowrap; }
.crumbs .c1 { width: 83px; } .crumbs .c2 { width: 70px; } .crumbs .c3 { width: 94px; }
.crumbs .c4 { width: 202px; border-right: 1px solid #222; font-size: 18px; letter-spacing: .25px; }
.pills { flex: 1; display: flex; align-items: center; padding: 0 0 2px 352px; gap: 12px; }
.pill { height: 29px; display: flex; align-items: center; border: 1px solid #8a8a8a; border-radius: 15px; background: linear-gradient(#3a3a3a, #111); font-size: 16.500px; padding-left: 11px; white-space: nowrap; flex: none; box-shadow: 0 0 0 1px #2a2a2a; letter-spacing: -.2px; }
.p1 { width: 64px; padding-left: 11px; letter-spacing: -.5px; }
.p2 { width: 402px; padding-left: 300px; } .p3 { width: 150px; padding-left: 9px; } .p4 { width: 108px; padding-left: 10px; }
.warn path { fill: #8a7a12; stroke: #c8b020; }
.warn .mark { stroke: #222; stroke-width: 2; }
.bars { display: flex; gap: 1px; margin-left: 7px; }
.bars i { width: 6px; height: 14px; border: 1px solid #000; background: #333; }
.bars .g { background: #3fd326; } .bars .r { background: #e00000; }
.tri { border: 4px solid transparent; border-top: 5px solid #fff; border-bottom: 0; margin-left: 5px; }
.p3 .bars { margin-left: 6px; }
.p4 .bars { margin-left: 11px; } .p4 .tri { margin-left: 4px; }
.p2 .bars { margin-left: auto; } .p2 .tri { margin-right: 10px; }

/* left panel */
.main { height: 848px; flex: none; display: flex; }
.left { width: 175px; display: flex; flex-direction: column; background: #ccc; border-right: 1px solid #000; position: relative; padding-right: 4px; }
.left::after { content: ""; position: absolute; left: 170px; top: 0; bottom: 0; width: 1px; background: #000; }
.head { height: 60px; text-align: center; padding-top: 7px; }
h1 { font-size: 19.500px; line-height: 24px; } h2 { font-size: 14px; line-height: 17px; letter-spacing: .4px; }
.grp { border-top: 1px solid #909090; box-shadow: inset 0 1px #f0f0f0; padding: 6px 4px 6px 5px; display: flex; flex-direction: column; gap: 3px; }
.first { padding-top: 7px; padding-bottom: 4px; }
.grp + .grp { padding-top: 5px; }
.last { border-bottom: 1px solid #909090; padding-bottom: 4px; }
h3 { font-size: 14px; line-height: 19px; text-align: center; letter-spacing: .2px; }
.val { height: 48px; background: #e5e5e5; border: 1px solid #b0b0b0; padding: 2px 4px 0 5px; text-align: center; }
.val p { display: flex; justify-content: space-between; line-height: 18px; font-size: 14px; }
.val b { display: block; font-size: 20px; line-height: 25px; padding-right: 4px; }
.lower { margin-top: auto; padding: 0 9px 8px 11px; display: flex; flex-direction: column; gap: 4px; }
.preview { height: 110px; background: #fff; border: 1px solid #000; }
.btn { height: 27px; display: flex; align-items: center; justify-content: center; background: linear-gradient(#f2f2f2, #c6c6c6); border: 1px solid #666; box-shadow: inset 1px 1px #fafafa, inset -1px -1px #aaa; font-size: 14px; }
.more { position: relative; padding: 0 3px 1px 0; letter-spacing: .1px; }
.more::after { content: ""; position: absolute; right: 4px; top: 8px; border: 4px solid transparent; border-left: 4px solid #000; border-right: 0; }

/* plan */
.stage { width: 1511px; position: relative; }
.plan { position: absolute; left: 0; top: 0; }
.stage .dz { margin: -161px 0 0 -175px; }
.dz { position: absolute; width: 54px; height: 26px; border: 1px solid #707070; border-top-color: #555; font-size: 14px; line-height: 25px; text-align: center; color: #fff; letter-spacing: -.1px; }
.dz::after { content: ""; position: absolute; right: 2px; top: 2px; border: 3px solid #fff; border-left-color: transparent; border-bottom-color: transparent; }
.dz.g { background: linear-gradient(#1aa800, #1c6a10); box-shadow: inset 0 2px #7ed070, inset 2px 0 #5fae52; }
.dz.y { color: #000; background: linear-gradient(#f7ef6e, #d2c412); box-shadow: inset 1px 2px #faf6b0; }
.dz.y::after { border-top-color: #000; border-right-color: #000; }
.dz.n { color: #f4f4f4; background: linear-gradient(#e0e0e0, #bdbdbd); box-shadow: inset 2px 2px #ececec; }
.dz.off { text-align: left; padding-left: 2px; }

/* legend */
.right { flex: 1; border-left: 1px solid #666; background: #d9d9d9; display: flex; flex-direction: column; justify-content: space-between; }
.legend { margin: 10px 12px 0 19px; height: 545px; border: 1px solid #a6a6a6; padding-left: 4px; }
h4 { font-size: 14px; line-height: 16px; margin: -9px 0 6px -3px; background: #d9d9d9; width: 54px; letter-spacing: .2px; }
.row { display: flex; align-items: center; line-height: 18px; white-space: nowrap; letter-spacing: .1px; }
.row.door { height: 50px; } .door svg { margin-right: 10px; } .up { padding-bottom: 3px; }
.stop { height: 40px; } .stop svg { margin-right: 8px; } .gap { margin-top: 15px; } .gap2 { margin-top: 7px; }
.stop text { fill: #fff; font: bold 9.700px "Liberation Sans", Arial, sans-serif; text-anchor: middle; }
.zone { height: 44px; } .sw { width: 31px; height: 31px; margin-right: 9px; border: 1px solid #ccc; }
.fault { background: #f5b3b5; border-color: #d0b0b0; } .on { background: #fff; border-color: #fff; } .yel { background: #fffab2; border-color: #d4cfa0; }
.lock { height: 30px; position: relative; top: 1px; } .lock svg { margin-right: 9px; }
.actions { padding: 0 24px 10px 27px; display: flex; flex-direction: column; gap: 15px; }
.actions .btn { height: 26px; }

/* alarm line */
.alarm { height: 31px; flex: none; display: flex; border-top: 1px solid #000; border-bottom: 1px solid #000; background: #e8e8e8; }
.ack { width: 61px; display: flex; align-items: center; justify-content: center; border-left: 2px solid #555; border-right: 1px solid #888; }
.cells { width: 1858px; height: 27px; margin-top: 1px; display: flex; border: 1px solid #808060; background: linear-gradient(#ff0 0 23px, #eee 23px); font-size: 19px; line-height: 25px; }
.cells span { border-left: 1px solid #a8a8a8; padding-left: 3px; white-space: nowrap; flex: none; }
.cells .a1 { width: 106px; border: 0; } .a2 { width: 115px; } .a3 { width: 59px; } .a4 { width: 1003px; letter-spacing: -.15px; } .a5 { width: 131px; } .a6 { width: 180px; letter-spacing: -.1px; font-size: 18.500px; }

/* bottom bar */
.tabs { height: 40px; flex: none; display: flex; background: linear-gradient(#646464, #2e2e2e); border-bottom: 1px solid #000; color: #fff; }
.sm { width: 74px; display: flex; align-items: center; justify-content: center; padding: 1px 1px 0 0; font-size: 18px; border-right: 1px solid #111; box-shadow: inset 1px 1px #777; background: linear-gradient(#646464, #444); }
.tab { width: 128px; display: flex; align-items: center; justify-content: center; padding: 2px 1px 0 0; text-align: center; font-size: 16px; line-height: 18px; letter-spacing: -.15px; border-right: 1px solid #000; box-shadow: inset 1px 1px #777; }
.tab.first { margin-left: 4px; line-height: 16px; }
.tab.active { background: linear-gradient(#262626, #606060); box-shadow: inset -1px -1px #999; }
.fill { flex: 1; border-right: 1px solid #111; box-shadow: inset 1px 1px #777; }
.ib { width: 59px; padding-left: 2px; border-right: 1px solid #111; box-shadow: inset 1px 1px #777; }

/* timer window */
.dialog { position: absolute; left: 1191px; top: 21px; width: 388px; height: 356px; border: 1px solid #8c8c8c; background: #f0f0f0; box-shadow: 0 4px 12px rgba(0,0,0,.35); font-size: 11.500px; letter-spacing: -.4px; display: flex; flex-direction: column; }
.title { height: 30px; background: #fff; display: flex; align-items: center; padding: 0 0 1px 10px; color: #999; font-family: "Noto Sans", sans-serif; font-size: 12px; }
.title span { margin-left: 4px; flex: 1; letter-spacing: 0; }
.ctl { margin-right: 17px; }
.form { display: grid; grid-template-columns: 53px 120px 73px 93px; column-gap: 7px; row-gap: 6px; padding: 12px 0 0 13px; align-items: start; }
.tb { height: 20px; background: #fff; border: 1px solid #7a7a7a; line-height: 18px; padding-left: 2px; white-space: nowrap; }
.wb { height: 21px; background: #e1e1e1; border: 1px solid #adadad; display: flex; align-items: center; justify-content: center; margin-top: 1px; }
.time { margin-top: 0; border-color: #0078d7; background: #e5f1fb; }
.path { grid-column: span 2; }
.form .path ~ .wb { margin-top: -1px; }
.pair { display: flex; gap: 7px; margin-top: -1px; }
.form .expo { width: 40px; margin-top: -1px; }
.toggle { width: 40px; height: 13px; margin-top: 5px; background: #fff; border-radius: 7px; }
.toggle i { display: block; width: 24px; height: 24px; transform: translateY(-6px); border-radius: 50%; background: #848484; }
.tree { list-style: none; width: 361px; height: 191px; margin: 10px 0 0 12px; padding-top: 1px; background: #fff; border: 1px solid #828790; }
.tree li { height: 16px; display: flex; align-items: center; gap: 2px; padding-left: 23px; position: relative; }
.tree li::before { content: ""; position: absolute; left: 8px; top: 4px; width: 9px; height: 9px; border: 1px solid #919191; background: linear-gradient(#4b63a7, #4b63a7) center/5px 1px no-repeat, linear-gradient(#4b63a7, #4b63a7) center/1px 5px no-repeat, #fff; }
.tree li::after { content: ""; position: absolute; left: 12px; top: 13px; height: 7px; border-left: 1px dotted #999; }
.tree li:last-child::after { display: none; }
.bottom { display: flex; margin: 6px 0 0 11px; }
.out { width: 301px; height: 43px; background: #fff; border: 1px solid #828790; }
.checks { padding: 1px 0 0 5px; } .checks p { display: flex; align-items: center; gap: 5px; height: 13px; margin-bottom: 13px; }
.cb { width: 13px; height: 13px; flex: none; border: 1px solid #333; background: #fff; position: relative; }
.cb.on { background: #fff; border-color: #333; }
.cb.on::after { content: ""; position: absolute; left: 3px; top: -.5px; width: 4.500px; height: 8.500px; border: solid #333; border-width: 0 1px 1px 0; transform: rotate(40deg); }
```
